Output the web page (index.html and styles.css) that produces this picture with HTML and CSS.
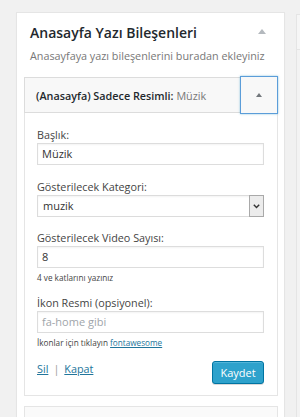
FILE: index.html
```html
<!DOCTYPE html>
<html lang="tr">
<head>
<meta charset="utf-8">
<title>Anasayfa Yazı Bileşenleri</title>
<link rel="stylesheet" href="styles.css">
</head>
<body>
<div class="page">
  <section class="card">
    <div class="card-head">
      <h3 class="card-title">Anasayfa Yazı Bileşenleri</h3>
      <span class="tri tri-light"></span>
    </div>
    <p class="card-desc">Anasayfaya yazı bileşenlerini buradan ekleyiniz</p>

    <div class="widget">
      <div class="widget-top">
        <div class="widget-title"><strong>(Anasayfa) Sadece Resimli:</strong> <span class="in-title">Müzik</span></div>
        <div class="widget-toggle"><span class="tri tri-dark"></span></div>
      </div>
      <div class="widget-inside">
        <div class="field first">
          <label class="label">Başlık:</label>
          <div class="input">Müzik</div>
        </div>
        <div class="field f2">
          <label class="label">Gösterilecek Kategori:</label>
          <div class="select">
            <span class="select-text">muzik</span>
            <span class="select-arrow">
              <svg width="7" height="5" viewBox="0 0 7 5"><path d="M0.8 0.8 L3.5 3.6 L6.2 0.8" fill="none" stroke="#333" stroke-width="1.4"/></svg>
            </span>
          </div>
        </div>
        <div class="field f3">
          <label class="label">Gösterilecek Video Sayısı:</label>
          <div class="input">8</div>
          <p class="hint h1">4 ve katlarını yazınız</p>
        </div>
        <div class="field f4">
          <label class="label">İkon Resmi (opsiyonel):</label>
          <div class="input placeholder">fa-home gibi</div>
          <p class="hint h2">İkonlar için tıklayın <a class="link" href="#">fontawesome</a></p>
        </div>
        <div class="widget-actions">
          <div class="links"><a class="link" href="#">Sil</a><span class="sep">|</span><a class="link" href="#">Kapat</a></div>
          <button class="btn-primary" type="button">Kaydet</button>
        </div>
      </div>
    </div>

    <div class="widget next">
      <div class="widget-top plain"></div>
    </div>
  </section>
  <aside class="side">
    <div class="side-box"></div>
    <div class="side-box second"></div>
  </aside>
</div>
</body>
</html>
```

FILE: styles.css
```css
html, body {
  margin: 0;
  padding: 0;
  background: #f1f1f1;
  overflow: hidden;
  height: 417px;
}
body {
  font-family: "Open Sans", "Noto Sans", sans-serif;
  color: #444;
}
.page {
  display: flex;
  align-items: flex-start;
  gap: 11px;
  padding: 12px 0 0 16px;
}
.card {
  flex: 0 0 269px;
  box-sizing: border-box;
  background: #fff;
  border: 1px solid #e5e5e5;
  box-shadow: 0 1px 1px rgba(0,0,0,.04);
  padding: 10px 6px 40px 7px;
}
.card-head {
  display: flex;
  align-items: center;
  justify-content: space-between;
  padding: 0 12px 0 6px;
  height: 20px;
}
.card-title {
  margin: 0;
  font-size: 14px;
  font-weight: 600;
  line-height: 20px;
  color: #23282d;
}
.tri {
  display: block;
  width: 0;
  height: 0;
  border-left: 4px solid transparent;
  border-right: 4px solid transparent;
}
.tri-light {
  border-bottom: 5px solid #b4b9be;
  margin-top: -4px;
}
.tri-dark {
  border-left-width: 3px;
  border-right-width: 3px;
  border-bottom: 4px solid #72777c;
}
.card-desc {
  margin: 4px 0 0;
  padding-left: 6px;
  font-size: 10.8px;
  line-height: 18px;
  color: #777;
}
.widget {
  margin-top: 12px;
}
.widget-top {
  box-sizing: border-box;
  height: 36px;
  display: flex;
  align-items: center;
  background: #f8f8f8;
  border: 1px solid #dcdcdc;
}
.widget-title {
  flex: 1;
  padding-left: 11px;
  font-size: 10.8px;
  color: #23282d;
  white-space: nowrap;
}
.widget-title strong {
  font-weight: 600;
}
.in-title {
  color: #777;
}
.widget-toggle {
  box-sizing: border-box;
  width: 38px;
  height: 38px;
  margin: -1px -1px -1px 0;
  border: 1px solid #5b9dd9;
  box-shadow: 0 0 2px rgba(30,140,190,.5);
  display: flex;
  align-items: center;
  justify-content: center;
  background: #f8f8f8;
}
.widget-inside {
  border: 1px solid #e5e5e5;
  border-top: 0;
  padding: 14px 13px 11px 12px;
  background: #fff;
}
.field.f2 { margin-top: 14px; }
.field.f3 { margin-top: 13px; }
.field.f4 { margin-top: 10px; }
.label {
  display: block;
  font-size: 10.8px;
  line-height: 16px;
  color: #444;
}
.input, .select {
  box-sizing: border-box;
  height: 22px;
  border: 1px solid #ddd;
  box-shadow: inset 0 1px 2px rgba(0,0,0,.05);
  background: #fff;
  font-size: 11px;
  line-height: 20px;
  padding-left: 4px;
  color: #333;
}
.placeholder {
  color: #a0a5aa;
}
.select {
  display: flex;
  justify-content: space-between;
  align-items: stretch;
  padding-right: 0;
  border-color: #dcdcdc;
}
.select-text {
  padding-left: 1px;
}
.select-arrow {
  width: 13px;
  display: flex;
  align-items: center;
  justify-content: center;
  background: #ececec;
  border-left: 1px solid #a9a9a9;
  margin: -1px -1px -1px 0;
  border-top: 1px solid #a9a9a9;
  border-bottom: 1px solid #a9a9a9;
  border-right: 1px solid #a9a9a9;
}
.hint {
  margin: 0;
  font-size: 8.2px;
  line-height: 14px;
  color: #444;
}
.hint.h1 { margin-top: 3px; }
.hint.h2 { margin-top: 3px; }
.link {
  color: #21759b;
  text-decoration: underline;
}
.widget-actions {
  margin-top: 11px;
  display: flex;
  justify-content: space-between;
  align-items: flex-start;
}
.links {
  font-size: 10.8px;
  line-height: 16px;
  padding-top: 0;
}
.sep {
  color: #999;
  margin: 0 5px;
}
.btn-primary {
  box-sizing: border-box;
  width: 52px;
  height: 23px;
  padding: 0;
  border: 1px solid #0074a2;
  border-radius: 3px;
  background: #2ea2cc;
  box-shadow: inset 0 1px 0 rgba(120,200,230,.5), 0 1px 0 rgba(0,0,0,.15);
  color: #fff;
  font-family: "Open Sans", "Noto Sans", sans-serif;
  font-size: 11px;
  line-height: 21px;
}
.widget.next {
  margin-top: 10px;
}
.widget-top.plain {
  background: #fafafa;
  border-color: #e5e5e5;
}
.side {
  flex: 0 0 20px;
  padding-top: 2px;
}
.side-box {
  box-sizing: border-box;
  height: 36px;
  background: #f6f6f6;
  border: 1px solid #e5e5e5;
}
.side-box.second {
  height: 400px;
  margin-top: 0;
  border-top: 0;
  background: #f3f3f3;
}
```
